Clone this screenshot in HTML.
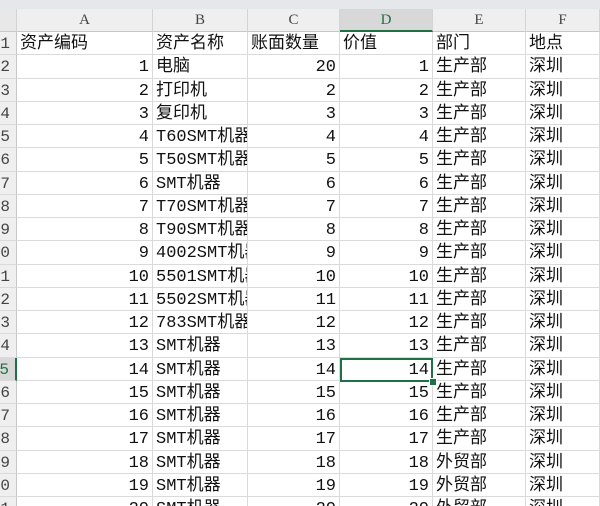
<!DOCTYPE html>
<html><head><meta charset="utf-8"><style>
html,body{margin:0;width:600px;height:506px;overflow:hidden}
body{background:#fff;position:relative;font-family:"Liberation Mono","Noto Sans CJK SC",sans-serif;font-size:17px;color:#111}
.top{position:absolute;left:0;top:0;width:600px;height:9px;background:#e4e8eb}
.hdr{position:absolute;top:9px;height:23px;background:#efefef;border-right:1px solid #d4d4d4;border-bottom:1px solid #c8c8c8;box-sizing:border-box;text-align:center;font-family:"Liberation Serif",serif;font-size:15px;line-height:23px;color:#444}
.c{position:absolute;height:23.25px;box-sizing:border-box;border-right:1px solid #dadada;border-bottom:1px solid #dadada;white-space:nowrap;overflow:hidden;line-height:25px;padding:0 3px}
.r{text-align:right}
.rn{position:absolute;left:0;width:17px;height:23.25px;box-sizing:border-box;background:#efefef;border-right:1px solid #c8c8c8;border-bottom:1px solid #dadada;overflow:hidden;line-height:25px;font-size:16px;color:#444}
.rn span{position:absolute;right:6px;top:0}
</style></head><body>
<div class="top"></div>
<div class="hdr" style="left:0;width:17px;background:#e8e8e8"></div>
<div class="hdr" style="left:17px;width:136px">A</div>
<div class="hdr" style="left:153px;width:95px">B</div>
<div class="hdr" style="left:248px;width:92px">C</div>
<div class="hdr" style="left:340px;width:93px;background:#d8d8d8;color:#1e7145;border-bottom:2px solid #1e7145">D</div>
<div class="hdr" style="left:433px;width:93px">E</div>
<div class="hdr" style="left:526px;width:74px">F</div>
<div id="g"></div>
<div style="position:absolute;left:340px;top:358px;width:93px;height:24px;box-sizing:border-box;border:2px solid #1e7145"></div>
<div style="position:absolute;left:429px;top:378px;width:6px;height:6px;background:#1e7145;border:1px solid #fff"></div>
<script>
var names=["电脑","打印机","复印机","T60SMT机器","T50SMT机器","SMT机器","T70SMT机器","T90SMT机器","4002SMT机器","5501SMT机器","5502SMT机器","783SMT机器","SMT机器","SMT机器","SMT机器","SMT机器","SMT机器","SMT机器","SMT机器","SMT机器"];
var h=23.25,s="";
var cols=[[17,136],[153,95],[248,92],[340,93],[433,93],[526,74]];
for(var r=0;r<21;r++){
 var y=32+r*h;
 var rn=r+1;
 s+='<div class="rn" style="top:'+y+'px;'+(rn==15?'background:#d8d8d8;color:#1e7145;border-right:2px solid #1e7145':'')+'"><span>'+rn+'</span></div>';
 var v;
 if(r==0)v=["资产编码","资产名称","账面数量","价值","部门","地点"];
 else{var n=r;v=[n,names[n-1],n==1?20:n,n,n>=18?"外贸部":"生产部","深圳"];}
 for(var c=0;c<6;c++){
  var cls="c"+((r>0&&(c==0||c==2||c==3))?" r":"");
  s+='<div class="'+cls+'" style="left:'+cols[c][0]+'px;top:'+y+'px;width:'+cols[c][1]+'px">'+v[c]+'</div>';
 }
}
document.getElementById("g").innerHTML=s;
</script>
</body></html>
